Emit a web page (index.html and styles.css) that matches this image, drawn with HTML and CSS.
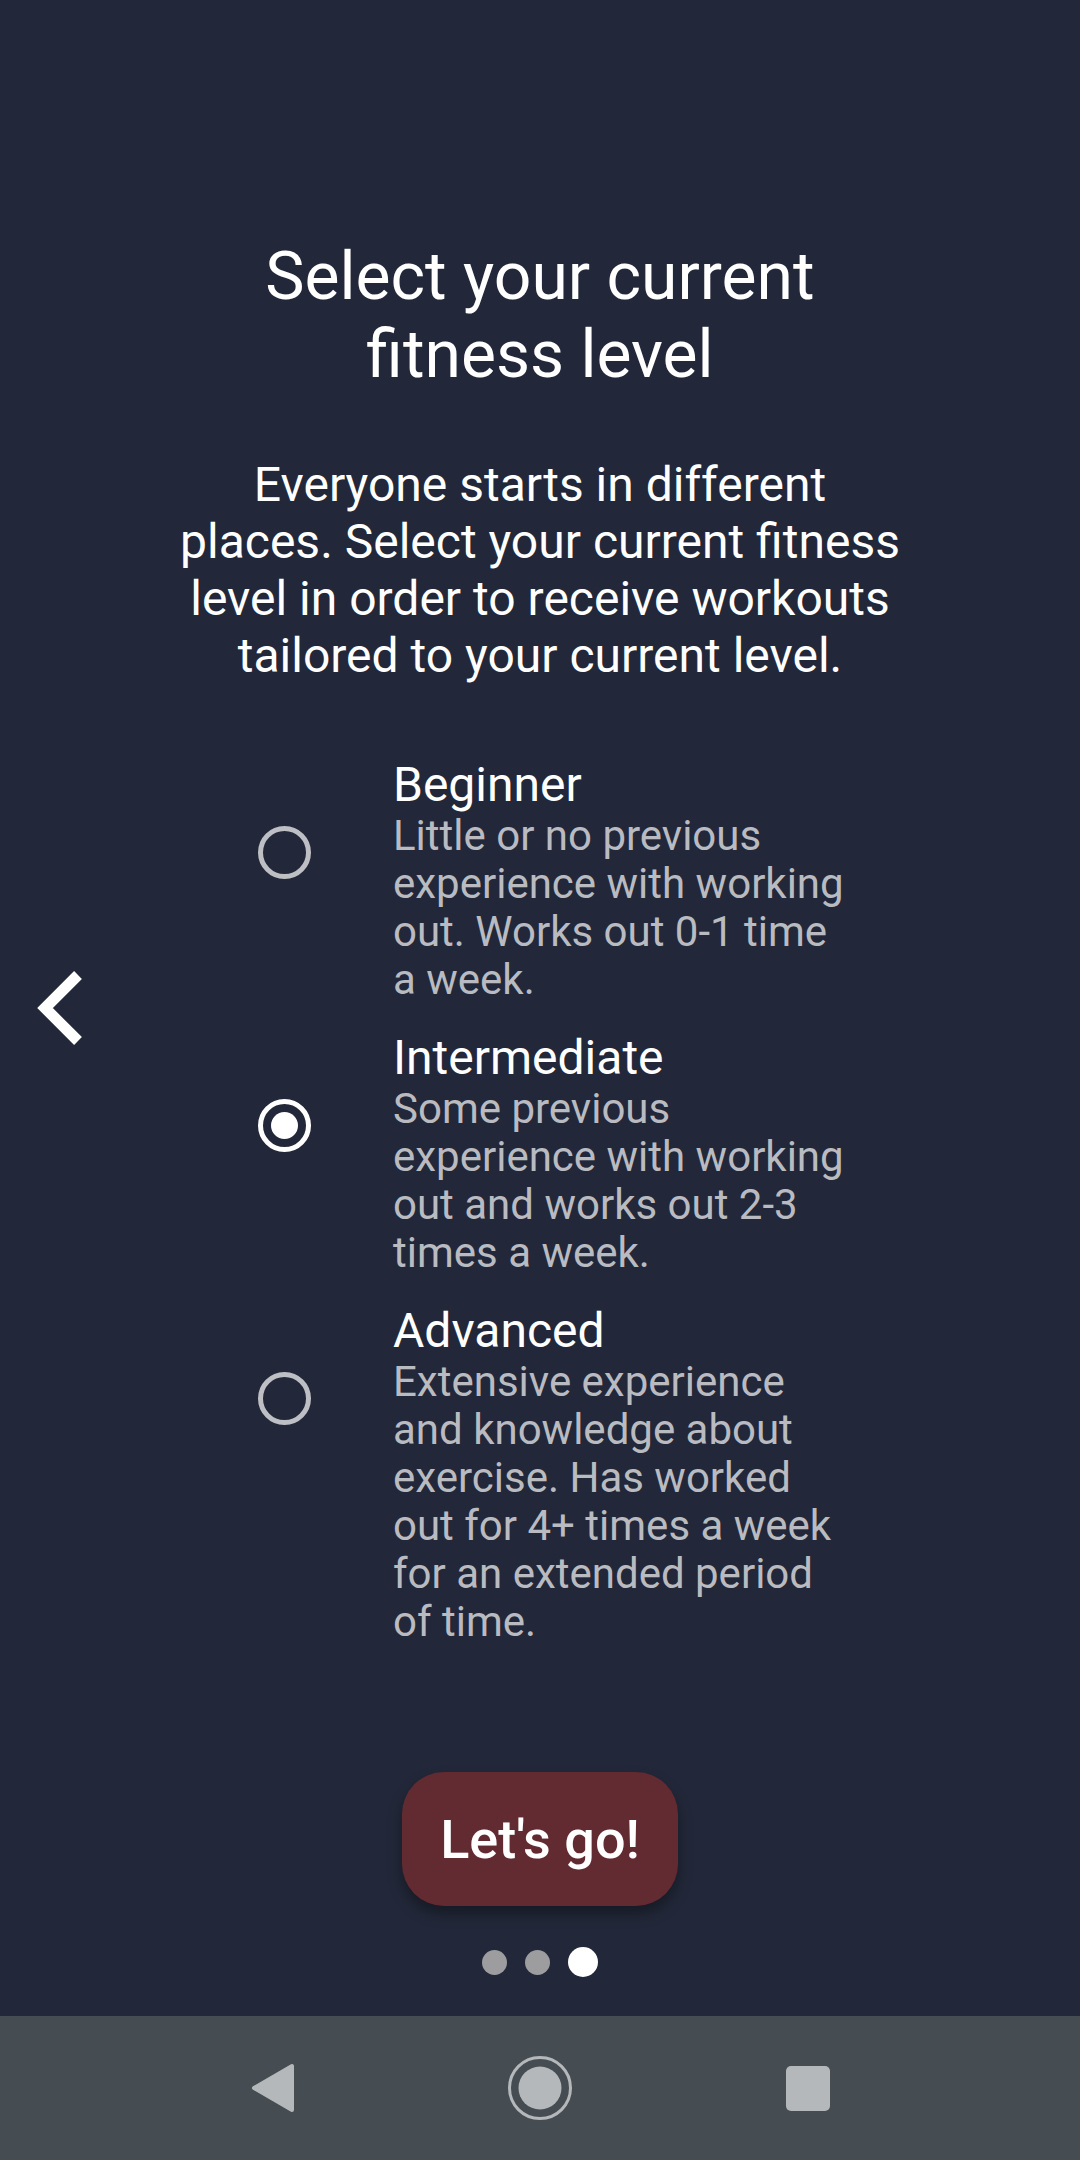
FILE: index.html
```html
<!DOCTYPE html>
<html lang="en">
<head>
<meta charset="utf-8">
<title>Select your current fitness level</title>
<link rel="stylesheet" href="styles.css">
</head>
<body>
<div class="phone">
  <main class="screen">
    <button class="pager-back" aria-label="Previous">
      <svg width="60" height="96" viewBox="0 0 60 96"><path d="M48 15 L15 48 L48 81" fill="none" stroke="#ffffff" stroke-width="11" stroke-linecap="butt" stroke-linejoin="miter"/></svg>
    </button>
    <h1 class="title">Select your current fitness level</h1>
    <p class="intro">Everyone starts in different places. Select your current fitness level in order to receive workouts tailored to your current level.</p>
    <div class="options">
      <div class="option">
        <span class="radio"></span>
        <div class="option-text">
          <div class="option-title">Beginner</div>
          <div class="option-desc">Little or no previous experience with working out. Works out 0-1 time a week.</div>
        </div>
      </div>
      <div class="option">
        <span class="radio checked"></span>
        <div class="option-text">
          <div class="option-title">Intermediate</div>
          <div class="option-desc">Some previous experience with working out and works out 2-3 times a week.</div>
        </div>
      </div>
      <div class="option">
        <span class="radio"></span>
        <div class="option-text">
          <div class="option-title">Advanced</div>
          <div class="option-desc">Extensive experience and knowledge about exercise. Has worked out for 4+ times a week for an extended period of time.</div>
        </div>
      </div>
    </div>
    <button class="go">Let's go!</button>
    <div class="dots">
      <span class="dot"></span>
      <span class="dot"></span>
      <span class="dot active"></span>
    </div>
  </main>
  <nav class="navbar">
    <span class="nav-slot">
      <svg width="48" height="52" viewBox="0 0 48 52"><path d="M6 26 L44 4 L44 48 Z" fill="#b4b8ba" stroke="#b4b8ba" stroke-width="4" stroke-linejoin="round"/></svg>
    </span>
    <span class="nav-slot">
      <svg width="68" height="68" viewBox="0 0 68 68"><circle cx="34" cy="34" r="30.5" fill="none" stroke="#b4b8ba" stroke-width="3"/><circle cx="34" cy="34" r="21.5" fill="#b4b8ba"/></svg>
    </span>
    <span class="nav-slot">
      <span class="nav-square"></span>
    </span>
  </nav>
</div>
</body>
</html>
```
FILE: styles.css
```css
html, body {
  margin: 0;
  padding: 0;
}
body {
  background: #222839;
  font-family: Roboto, "Liberation Sans", sans-serif;
  color: #ffffff;
}
.phone {
  width: 1080px;
  height: 2160px;
  display: flex;
  flex-direction: column;
  overflow: hidden;
}
.screen {
  position: relative;
  flex: 1;
  display: flex;
  flex-direction: column;
  align-items: center;
  padding-top: 238px;
  box-sizing: border-box;
}
.pager-back {
  position: absolute;
  left: 30px;
  top: 960px;
  width: 60px;
  height: 96px;
  padding: 0;
  border: 0;
  background: none;
}
.pager-back svg {
  display: block;
}
.title {
  margin: 0;
  width: 760px;
  text-align: center;
  font-size: 66px;
  line-height: 78px;
  font-weight: 400;
}
.intro {
  margin: 62px 0 0;
  width: 726px;
  text-align: center;
  font-size: 48px;
  line-height: 57px;
}
.options {
  margin-top: 73px;
  align-self: stretch;
  display: flex;
  flex-direction: column;
  gap: 26px;
  padding-left: 258px;
}
.option {
  display: flex;
  align-items: flex-start;
}
.radio {
  flex: none;
  width: 53px;
  height: 53px;
  margin-top: 69px;
  margin-right: 82px;
  box-sizing: border-box;
  border: 5.5px solid #bebfc4;
  border-radius: 50%;
  display: flex;
  align-items: center;
  justify-content: center;
}
.radio.checked {
  border-color: #ffffff;
}
.radio.checked::after {
  content: "";
  width: 27px;
  height: 27px;
  border-radius: 50%;
  background: #ffffff;
}
.option-text {
  width: 457px;
}
.option-title {
  font-size: 48px;
  line-height: 55px;
  color: #ffffff;
}
.option-desc {
  font-size: 42px;
  line-height: 48px;
  color: #b9bbc1;
}
.go {
  margin-top: 126px;
  width: 276px;
  height: 134px;
  border: 0;
  border-radius: 42px;
  background: #622a31;
  color: #ffffff;
  font-family: Roboto, "Liberation Sans", sans-serif;
  font-size: 54px;
  font-weight: 500;
  box-shadow: 0 8px 14px rgba(0, 0, 0, 0.35);
  padding: 0;
}
.dots {
  margin-top: 41px;
  height: 30px;
  display: flex;
  align-items: center;
  gap: 18px;
}
.dot {
  width: 25px;
  height: 25px;
  border-radius: 50%;
  background: #9d9d9f;
}
.dot.active {
  width: 30px;
  height: 30px;
  background: #ffffff;
}
.navbar {
  flex: none;
  height: 144px;
  background: #454c52;
  display: flex;
  align-items: center;
  justify-content: center;
  gap: 168px;
}
.nav-slot {
  width: 100px;
  height: 100px;
  display: flex;
  align-items: center;
  justify-content: center;
}
.nav-slot svg {
  display: block;
}
.nav-square {
  width: 44px;
  height: 45px;
  border-radius: 5px;
  background: #b4b8ba;
}
```
